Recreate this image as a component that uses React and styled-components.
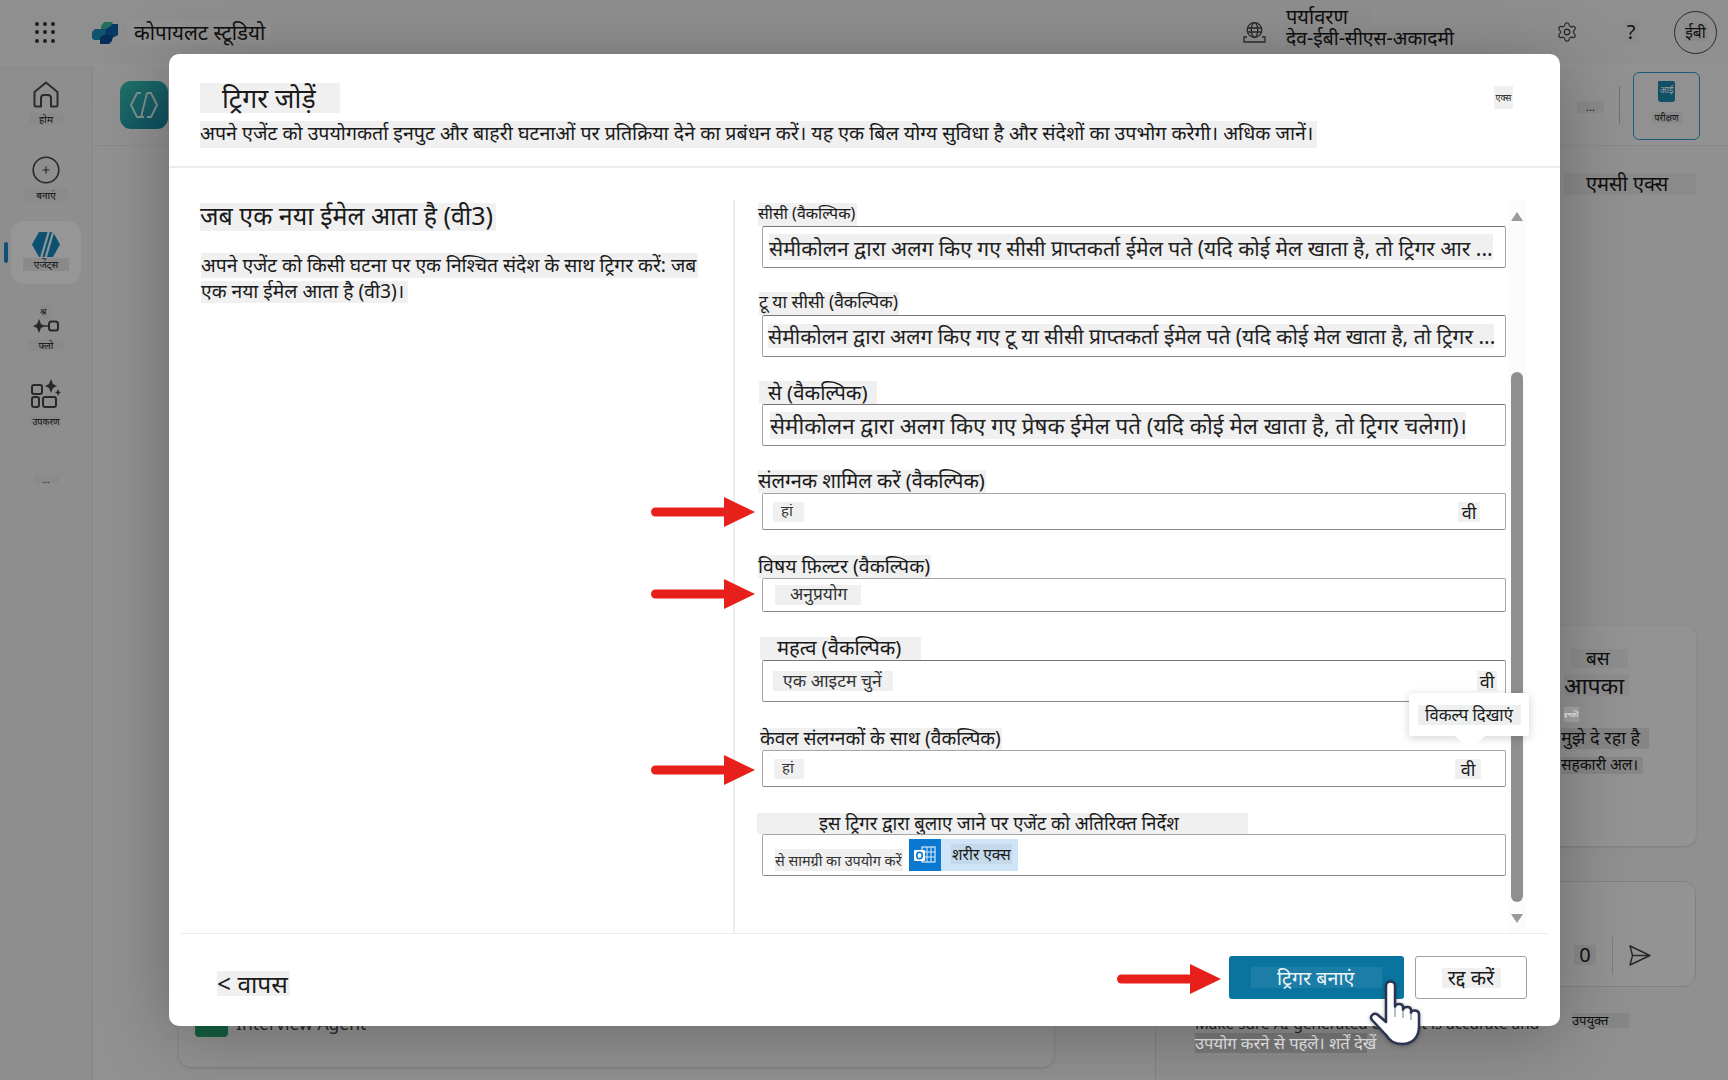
import React from 'react';
import styled, { createGlobalStyle } from 'styled-components';
import { Settings } from 'lucide-react';

const FONT = '"Noto Sans","Noto Sans Devanagari","Lohit Devanagari","Liberation Sans",sans-serif';

const Global = createGlobalStyle`
  html, body { margin: 0; padding: 0; height: 100%; overflow: hidden; background: #efefef; }
  body { font-family: ${FONT}; color: #111; }
  * { box-sizing: border-box; }
`;

const Page = styled.div`
  position: relative; width: 1728px; height: 1080px; overflow: hidden;
  display: flex; flex-direction: column; background: #efefef;
`;

/* ---------- text patches ---------- */
const Patch = styled.span`
  display: inline-block; white-space: nowrap;
  font-size: ${p => p.$size || 16}px;
  line-height: ${p => (p.$h || 22) - 2 * (p.$up || 0)}px;
  height: ${p => p.$h || 22}px;
  width: ${p => (p.$w ? p.$w + 'px' : 'auto')};
  padding-left: ${p => p.$pl || 0}px;
  margin-left: ${p => p.$ml || 0}px;
  margin-right: ${p => p.$mr || 0}px;
  margin-top: ${p => p.$mt || 0}px;
  background: ${p => p.$bg || '#f0f0f0'};
  color: ${p => p.$color || '#1a1a1a'};
  text-align: ${p => p.$align || 'left'};
  flex: none;
`;

/* ---------- top bar ---------- */
const TopBar = styled.header`
  height: 65px; flex: none; display: flex; align-items: center;
  padding-left: 35px; border-bottom: 1px solid #f6f6f6; background: #eeeeee;
`;
const AppDots = styled.div`
  width: 21px; height: 21px; display: grid; grid-template-columns: repeat(3, 5px);
  justify-content: space-between; align-content: space-between;
  span { width: 4px; height: 4px; border-radius: 50%; background: #333; }
`;
const LogoWrap = styled.div`margin-left: 36px; width: 26px; height: 24px; flex: none; display: flex;`;
const Spacer = styled.div`flex: 1;`;
const EnvBlock = styled.div`
  display: flex; flex-direction: column; align-items: flex-start; margin-left: 20px; width: 254px; padding-bottom: 10px;
`;
const HeaderIcon = styled.div`
  flex: none; display: flex; align-items: center; justify-content: center;
  margin-left: ${p => p.$ml || 0}px; color: #4a4a4a;
`;
const Avatar = styled.div`
  width: 43px; height: 43px; border-radius: 50%; border: 1px solid #444; flex: none;
  display: flex; align-items: center; justify-content: center; margin: 0 11px 0 35px;
`;

/* ---------- rail ---------- */
const Body = styled.div`flex: 1; display: flex; min-height: 0;`;
const Rail = styled.nav`
  width: 93px; flex: none; display: flex; flex-direction: column; align-items: center;
  padding-top: 16px; background: #ededed; border-right: 1px solid #dfdfdf; position: relative;
`;
const RailItem = styled.div`
  display: flex; flex-direction: column; align-items: center;
  margin-top: ${p => p.$mt || 0}px;
  width: ${p => (p.$active ? '70px' : 'auto')};
  height: ${p => (p.$active ? '63px' : 'auto')};
  padding-top: ${p => (p.$active ? '11px' : 0)};
  border-radius: 13px;
  background: ${p => (p.$active ? '#fbfbfb' : 'transparent')};
  position: relative;
`;
const RailBar = styled.span`
  position: absolute; left: -7px; top: 21px; width: 4px; height: 21px; border-radius: 2px; background: #1f86c8;
`;

/* ---------- main ---------- */
const Main = styled.main`flex: 1; display: flex; flex-direction: column; min-width: 0; background: #f2f2f3;`;
const SubHeader = styled.div`
  height: 81px; flex: none; display: flex; align-items: center; padding: 0 28px 0 27px;
  border-bottom: 1px solid #e4e4e4;
`;
const AgentLogo = styled.div`
  width: 48px; height: 48px; border-radius: 11px; flex: none;
  background: linear-gradient(135deg, #34c0b0, #1a7f9f);
  display: flex; align-items: center; justify-content: center;
`;
const VRule = styled.span`width: 1px; height: 38px; background: #bdbdbd; margin: 0 13px 0 15px;`;
const TestButton = styled.div`
  width: 67px; height: 68px; border: 1.5px solid #2d9cc8; border-radius: 6px; flex: none; margin-top: 1px;
  display: flex; flex-direction: column; align-items: center; padding-top: 8px; gap: 10px;
`;
const TestBadge = styled.div`
  width: 17px; height: 21px; background: #1f87a8; border-radius: 1px 2px 3px 3px; color: #fff;
  font-size: 9px; line-height: 18px; text-align: center;
`;
const Content = styled.div`flex: 1; display: flex; min-height: 0;`;
const LeftRegion = styled.div`
  width: 1062px; flex: none; display: flex; flex-direction: column; justify-content: flex-end;
  padding: 0 101px 13px 86px;
`;
const AgentCard = styled.div`
  height: 80px; border-radius: 12px; background: #f6f6f6; padding: 17px 16px; display: flex; align-items: flex-start; gap: 8px;
  box-shadow: 0 1px 3px rgba(0,0,0,.15); font-size: 17.500px; color: #444;
`;
const AgentTile = styled.div`width: 33px; height: 33px; border-radius: 4px; background: #25a06f; flex: none;`;
const AgentName = styled.span`margin-top: 7px; white-space: nowrap;`;
const RightPanel = styled.aside`
  flex: 1; border-left: 1px solid #dddddd; background: #f0f0f0; padding: 27px 55px 0 39px;
  display: flex; flex-direction: column; align-items: stretch;
`;
const ChatCard = styled.div`
  height: 220px; margin-top: 431px; border-radius: 12px; background: #f5f5f5;
  box-shadow: 0 1px 3px rgba(0,0,0,.12);
  display: flex; flex-direction: column; align-items: flex-start; padding: 23px 0 0 366px;
`;
const InputCard = styled.div`
  height: 106px; margin-top: 35px; border-radius: 12px; border: 1px solid #d8d8d8; background: #f5f5f5;
  display: flex; justify-content: flex-end; align-items: center; padding: 42px 44px 0 0;
`;
const CardRule = styled.span`width: 1px; height: 37px; background: #cfcfcf; margin: 0 16px;`;
const NoteBlock = styled.div`
  margin-top: 26px; display: flex; flex-direction: column; align-items: flex-start;
`;
const NoteRow = styled.div`display: flex; align-items: flex-start; width: 100%; height: 20px;`;
const NoteText = styled.span`font-size: 15.300px; line-height: 20px; color: #333; white-space: nowrap; width: 366px; flex: none;`;
const NoteLight = styled.div`
  position: relative; z-index: 1; height: 20px; width: 172px; background: #7c7c7c; color: #f2f2f2;
  font-size: 16.500px; line-height: 20px; white-space: nowrap;
`;
const WhiteTag = styled.div`
  position: relative; z-index: 1; height: 15px; width: 15px; margin: 11px 0 0 3px; background: #a6a6a6; color: #fff;
  font-size: 7px; line-height: 15px; white-space: nowrap; overflow: hidden;
`;

/* ---------- scrim + modal ---------- */
const Scrim = styled.div`position: absolute; inset: 0; background: rgba(0,0,0,.4);`;
const Modal = styled.section`
  position: absolute; z-index: 2; left: 169px; top: 54px; width: 1391px; height: 972px;
  background: #fff; border-radius: 10px; display: flex; flex-direction: column;
  box-shadow: 0 10px 70px rgba(0,0,0,.28);
`;
const ModalHeader = styled.div`
  height: 114px; flex: none; padding: 29px 0 0 31px; border-bottom: 2px solid #ececec;
`;
const TitleRow = styled.div`display: flex; justify-content: space-between; align-items: flex-start;`;
const ModalMiddle = styled.div`flex: 1; display: flex; min-height: 0;`;
const LeftCol = styled.div`
  width: 566px; flex: none; margin-top: 32px; padding: 3px 34px 0 31px; border-right: 2px solid #ededed;
  display: flex; flex-direction: column; align-items: flex-start;
`;
const Form = styled.div`
  width: 771px; flex: none; padding: 35px 0 0 27px; display: flex; flex-direction: column;
`;
const Field = styled.div`
  display: flex; flex-direction: column; align-items: flex-start; margin-top: ${p => p.$gap || 0}px;
`;
const InputBox = styled.div`
  width: 744px; height: ${p => p.$h}px; border: 1px solid #a6a6a6; border-bottom-color: #8a8a8a;
  border-top-color: ${p => p.$dark ? '#777' : '#a6a6a6'}; border-radius: 2px;
  display: flex; align-items: center; justify-content: space-between; padding: 0 ${p => p.$pr ?? 8}px 0 6px;
`;
const InlineRow = styled.div`display: flex; align-items: center;`;
const SourceTile = styled.div`display: flex; height: 32px; margin-left: 6px; background: #cfe4f7; width: 109px;`;
const SourceIcon = styled.div`
  width: 32px; height: 32px; background: #0a78d0; display: flex; align-items: center; justify-content: center; flex: none;
`;
const SourceName = styled.span`
  margin: 5px 0 0 10px; height: 20px; padding: 0 1px; background: #c4d9eb; font-size: 15.500px; line-height: 20px; color: #1a1a1a; white-space: nowrap;
`;
const ScrollCol = styled.div`
  width: 18px; margin-left: 2px; margin-top: 32px; flex: none; display: flex; flex-direction: column; align-items: center; padding-top: 12px;
  background: #fcfcfc;
`;
const Thumb = styled.div`width: 12px; height: 530px; margin-top: 151px; border-radius: 6px; background: #8f8f8f;`;
const ArrowUp = styled.div`
  width: 0; height: 0; border: 6.500px solid transparent; border-top: 0; border-bottom: 9px solid #9a9a9a;
`;
const ArrowDown = styled.div`
  width: 0; height: 0; margin-top: 12px; border: 6.500px solid transparent; border-bottom: 0; border-top: 9px solid #9a9a9a;
`;
const Footer = styled.div`
  height: 93px; flex: none; margin: 0 12px; border-top: 1px solid #ececec;
  display: flex; align-items: flex-start; padding: 22px 21px 0 36px;
`;
const PrimaryButton = styled.button`
  width: 175px; height: 43px; border: 0; border-radius: 3px; background: #0a74a0; font-family: inherit;
  display: flex; align-items: center; justify-content: center; padding: 0;
`;
const SecondaryButton = styled.button`
  width: 112px; height: 43px; margin-left: 11px; border: 1px solid #a0a0a0; border-radius: 3px; background: #fff; font-family: inherit;
  display: flex; align-items: center; justify-content: center; padding: 0;
`;

/* ---------- overlays ---------- */
const Tooltip = styled.div`
  position: absolute; z-index: 3; left: 1409px; top: 693px; width: 120px; height: 43px; background: #fff; border-radius: 3px;
  box-shadow: 0 2px 10px rgba(0,0,0,.18); display: flex; align-items: center; justify-content: center;
  &::after {
    content: ''; position: absolute; left: 46px; top: 43px; width: 0; height: 0;
    border-left: 15px solid transparent; border-right: 15px solid transparent; border-top: 14px solid #fff;
  }
`;
const RedArrow = styled.svg`position: absolute; z-index: 3; left: ${p => p.$x}px; top: ${p => p.$y}px;`;
const Hand = styled.svg`position: absolute; z-index: 3; left: 1369px; top: 978px; filter: drop-shadow(0 1px 2px rgba(0,0,0,.3));`;

const Arrow = ({ x, y }) => (
  <RedArrow $x={x} $y={y - 15} width="104" height="30" viewBox="0 0 104 30">
    <rect x="0" y="10.500" width="76" height="9" rx="4.500" fill="#e8201c" />
    <path d="M73 0 L104 15 L73 30 Z" fill="#e8201c" />
  </RedArrow>
);

const fields = [
  { label: 'सीसी (वैकल्पिक)', size: 16, lw: 99, lml: -4, lup: 1, gap: 0, ph: 'सेमीकोलन द्वारा अलग किए गए सीसी प्राप्तकर्ता ईमेल पते (यदि कोई मेल खाता है, तो ट्रिगर आर ...', phSize: 21, phH: 26, phW: 724, phUp: -1, h: 42, dark: true },
  { label: 'टू या सीसी (वैकल्पिक)', size: 17.500, lw: 140, lml: -3, lup: 2, gap: 24, ph: 'सेमीकोलन द्वारा अलग किए गए टू या सीसी प्राप्तकर्ता ईमेल पते (यदि कोई मेल खाता है, तो ट्रिगर ...', phSize: 21, phH: 24, phW: 726, phMl: -1, h: 42, dark: true },
  { label: 'से (वैकल्पिक)', size: 20.400, lw: 118, lml: -3, lpl: 9, gap: 24, ph: 'सेमीकोलन द्वारा अलग किए गए प्रेषक ईमेल पते (यदि कोई मेल खाता है, तो ट्रिगर चलेगा)।', phSize: 22.300, phH: 27, phW: 696, phMl: 1, h: 42, dark: true },
  { label: 'संलग्नक शामिल करें (वैकल्पिक)', size: 20, lw: 228, lml: -4, lup: 1, gap: 24, h: 37, val: 'हां', vw: 31, vpl: 8, vml: 4, vsize: 15, chev: 'वी', chevW: 22, chevR: 25 },
  { label: 'विषय फ़िल्टर (वैकल्पिक)', size: 19.500, lw: 173, lml: -4, lup: 1, gap: 25, h: 34, val: 'अनुप्रयोग', vw: 86, vpl: 15, vml: 6, vsize: 17.400 },
  { label: 'महत्व (वैकल्पिक)', size: 20.200, lw: 161, lml: -2, lpl: 17, lup: 1, gap: 25, h: 42, val: 'एक आइटम चुनें', vw: 120, vpl: 10, vml: 4, vsize: 17.500, vup: 1, chev: 'वी', chevW: 20, chevR: 8, dark: true },
  { label: 'केवल संलग्नकों के साथ (वैकल्पिक)', size: 19.200, lh: 22, lw: 242, lml: -2, lup: 1, gap: 26, h: 37, val: 'हां', vw: 30, vpl: 8, vml: 5, vsize: 15, chev: 'वी', chevW: 26, chevR: 24 },
];

const Home = () => (
  <svg width="26" height="27" viewBox="0 0 26 27" fill="none" stroke="#4a4a4a" strokeWidth="2" strokeLinejoin="round">
    <path d="M1.500 11 L13 1.500 L24.500 11 V24 a1.500 1.500 0 0 1-1.500 1.500 H18 V17 a3 3 0 0 0-3-3 H11 a3 3 0 0 0-3 3 V25.500 H3 a1.500 1.500 0 0 1-1.500-1.500 Z" />
  </svg>
);
const Plus = () => (
  <svg width="28" height="28" viewBox="0 0 28 28" fill="none" stroke="#444">
    <circle cx="14" cy="14" r="12.800" strokeWidth="1.600" />
    <path d="M14 10.500 V17.500 M10.500 14 H17.500" strokeWidth="1.200" />
  </svg>
);
const AgentHex = () => (
  <svg width="28" height="25" viewBox="0 0 28 25">
    <path d="M7 0 H21 L28 12.500 L21 25 H7 L0 12.500 Z" fill="#1587bf" />
    <path d="M17 -1 L9 26 M21.500 -1 L13.500 26" stroke="#eef6fa" strokeWidth="2.200" />
  </svg>
);
const FlowIcon = () => (
  <svg width="26" height="14" viewBox="0 0 26 14" fill="#444">
    <path d="M6 0 L8 5 L12 7 L8 9 L6 14 L4 9 L0 7 L4 5 Z" />
    <path d="M11 6.300 H15 V7.700 H11 Z" />
    <rect x="16" y="2.500" width="9" height="9" rx="2.500" fill="none" stroke="#444" strokeWidth="2" />
  </svg>
);
const Tools = () => (
  <svg width="30" height="29" viewBox="0 0 30 29" fill="none" stroke="#444" strokeWidth="2">
    <rect x="1" y="6" width="10" height="9" rx="2" />
    <rect x="1" y="18" width="7" height="10" rx="2" />
    <rect x="12" y="18" width="13" height="10" rx="2" />
    <path d="M20 0 L22 5 L26 7 L22 9 L20 14 L18 9 L14 7 L18 5 Z M27 10 L28 12.500 L30 13.500 L28 14.500 L27 17 L26 14.500 L24 13.500 L26 12.500 Z" fill="#444" stroke="none" />
  </svg>
);
const CopilotLogo = () => (
  <svg width="26" height="24" viewBox="0 0 26 24">
    <path d="M10 8 L16 4 H26 V15 L20 18 H10 Z" fill="#0d5fa8" />
    <path d="M9 6 L12 2 H21 L19 6 L14 9 H9 Z" fill="#3cb7a0" />
    <path d="M0 12 L3 9 H14 L13 15 L9 20 H2 L0 18 Z" fill="#1a8cb5" />
    <path d="M8 18 L11 15 H21 L20 21 L17 24 H8 Z" fill="#0a4a94" />
  </svg>
);
const GlobeBase = () => (
  <svg width="23" height="21" viewBox="0 0 23 21" fill="none" stroke="#444" strokeWidth="1.300">
    <circle cx="11.500" cy="8" r="7.300" />
    <ellipse cx="11.500" cy="8" rx="3.200" ry="7.300" />
    <path d="M4.300 6 H18.700 M4.300 10 H18.700" />
    <path d="M4 15 H1 V20 H22 V15 H19" />
  </svg>
);
const SendIcon = () => (
  <svg width="22" height="21" viewBox="0 0 22 21" fill="none" stroke="#444" strokeWidth="1.400" strokeLinejoin="round">
    <path d="M1 1 L21 10.500 L1 20 L3.500 10.500 Z M3.500 10.500 H21" />
  </svg>
);
const OutlookIcon = () => (
  <svg width="22" height="20" viewBox="0 0 22 20">
    <rect x="8" y="2" width="13" height="15" fill="none" stroke="#d8ecfb" strokeWidth="1.200" />
    <path d="M8 7 H21 M8 12 H21 M13 2 V17 M17 2 V17" stroke="#d8ecfb" strokeWidth="1" />
    <rect x="0" y="5" width="11" height="11" rx="1" fill="#fff" />
    <ellipse cx="5.500" cy="10.500" rx="2.800" ry="3.300" fill="none" stroke="#0a78d0" strokeWidth="1.600" />
  </svg>
);

export default function App() {
  return (
    <Page>
      <Global />
      <TopBar>
        <AppDots>{Array.from({ length: 9 }, (_, i) => <span key={i} />)}</AppDots>
        <LogoWrap><CopilotLogo /></LogoWrap>
        <Patch $size={20.500} $h={23} $w={144} $pl={7} $ml={9} $bg="#f4f4f4">कोपायलट स्टूडियो</Patch>
        <Spacer />
        <HeaderIcon><GlobeBase /></HeaderIcon>
        <EnvBlock>
          <Patch $size={20} $h={20} $w={85} $bg="#ebebeb">पर्यावरण</Patch>
          <Patch $size={19.300} $h={20} $w={166} $mt={1} $bg="#ebebeb">देव-ईबी-सीएस-अकादमी</Patch>
        </EnvBlock>
        <HeaderIcon $ml={16}><Settings size={22} strokeWidth={1.400} /></HeaderIcon>
        <Patch $size={20} $h={24} $w={16} $ml={45} $align="center" $bg="#ebebeb">?</Patch>
        <Avatar><Patch $size={15.500} $h={18} $w={24} $align="center" $bg="#e6e6e6">ईबी</Patch></Avatar>
      </TopBar>
      <Body>
        <Rail>
          <RailItem>
            <Home />
            <Patch $size={10} $h={12} $w={35} $mt={5} $align="center" $bg="#e6e6e6">होम</Patch>
          </RailItem>
          <RailItem $mt={31}>
            <Plus />
            <Patch $size={10} $h={12} $w={44} $mt={5} $align="center" $bg="#e6e6e6">बनाएं</Patch>
          </RailItem>
          <RailItem $mt={20} $active>
            <RailBar />
            <AgentHex />
            <Patch $size={10} $h={13} $w={46} $mt={1} $align="center" $bg="#e6e6e6">एजेंट्स</Patch>
          </RailItem>
          <RailItem $mt={21}>
            <Patch $size={9} $h={14} $w={12} $bg="#e6e6e6">श्र</Patch>
            <FlowIcon />
            <Patch $size={10} $h={12} $w={36} $mt={6} $align="center" $bg="#e6e6e6">फ्लो</Patch>
          </RailItem>
          <RailItem $mt={28}>
            <Tools />
            <Patch $size={9} $h={11} $w={32} $mt={8} $align="center" $bg="#e6e6e6">उपकरण</Patch>
          </RailItem>
          <RailItem $mt={48}>
            <Patch $size={9} $h={9} $w={25} $align="center" $bg="#e6e6e6">...</Patch>
          </RailItem>
        </Rail>
        <Main>
          <SubHeader>
            <AgentLogo>
              <svg width="28" height="26" viewBox="0 0 28 26" fill="none" stroke="#d8f2ee" strokeWidth="1.800" strokeLinejoin="round">
                <path d="M11 1 H7 L1 13 L7 25 H14 M17 1 H21 L27 13 L21 25 H17 M17 1 L11 25" />
              </svg>
            </AgentLogo>
            <Spacer />
            <Patch $size={11} $h={12} $w={27} $mt={3} $align="center" $bg="#e6e6e6">...</Patch>
            <VRule />
            <TestButton>
              <TestBadge>आई</TestBadge>
              <Patch $size={9} $h={11} $w={30} $align="center" $bg="#e6e6e6">परीक्षण</Patch>
            </TestButton>
          </SubHeader>
          <Content>
            <LeftRegion>
              <AgentCard><AgentTile /><AgentName>Interview Agent</AgentName></AgentCard>
            </LeftRegion>
            <RightPanel>
              <Patch $size={20} $h={22} $w={132} $pl={22} $ml={369} $bg="#e6e6e6">एमसी एक्स</Patch>
              <ChatCard>
                <Patch $size={19} $h={19} $w={57} $pl={15} $ml={10} $bg="#ebebeb">बस</Patch>
                <Patch $size={23} $h={22} $w={65} $ml={3} $mt={6} $bg="#ebebeb">आपका</Patch>
                <WhiteTag>इनकी</WhiteTag>
                <Patch $size={18} $h={21} $w={88} $mt={6} $up={1} $bg="#e0e0e0">मुझे दे रहा है</Patch>
                <Patch $size={15.500} $h={17} $w={82} $mt={8} $up={1} $bg="#e0e0e0">सहकारी अल।</Patch>
              </ChatCard>
              <InputCard>
                <Patch $size={20} $h={20} $w={22} $align="center" $bg="#e6e6e6">0</Patch>
                <CardRule />
                <SendIcon />
              </InputCard>
              <NoteBlock>
                <NoteRow>
                  <NoteText>Make sure AI-generated content is accurate and</NoteText>
                  <Patch $size={13} $h={15} $w={57} $ml={11} $bg="#e2e2e2">उपयुक्त</Patch>
                </NoteRow>
                <NoteLight>उपयोग करने से पहले। शर्तें देखें</NoteLight>
              </NoteBlock>
            </RightPanel>
          </Content>
        </Main>
      </Body>
      <Scrim />
      <Modal>
        <ModalHeader>
          <TitleRow>
            <Patch $size={26.500} $h={30} $w={140} $pl={22}>ट्रिगर जोड़ें</Patch>
            <Patch $size={9} $h={23} $w={19} $mt={3} $mr={47} $align="center">एक्स</Patch>
          </TitleRow>
          <Patch $size={19.600} $h={27} $w={1117} $mt={8} $up={2}>अपने एजेंट को उपयोगकर्ता इनपुट और बाहरी घटनाओं पर प्रतिक्रिया देने का प्रबंधन करें। यह एक बिल योग्य सुविधा है और संदेशों का उपभोग करेगी। अधिक जानें।</Patch>
        </ModalHeader>
        <ModalMiddle>
          <LeftCol>
            <Patch $size={25} $h={28} $w={296} $up={2}>जब एक नया ईमेल आता है (वी3)</Patch>
            <Patch $size={19.300} $h={25} $w={497} $ml={1} $mt={22} $up={1}>अपने एजेंट को किसी घटना पर एक निश्चित संदेश के साथ ट्रिगर करें: जब</Patch>
            <Patch $size={19.300} $h={22} $w={207} $ml={1} $mt={3} $up={1}>एक नया ईमेल आता है (वी3)।</Patch>
          </LeftCol>
          <Form>
            {fields.map(f => (
              <Field key={f.label} $gap={f.gap}>
                <Patch $size={f.size} $h={f.lh || 23} $w={f.lw} $ml={f.lml} $pl={f.lpl} $up={f.lup}>{f.label}</Patch>
                <InputBox $h={f.h} $dark={f.dark} $pr={f.chevR ?? 8}>
                  {f.ph && <Patch $size={f.phSize} $h={f.phH} $w={f.phW} $ml={f.phMl} $up={f.phUp} $color="#222">{f.ph}</Patch>}
                  {f.val && <Patch $size={f.vsize} $h={20} $w={f.vw} $pl={f.vpl} $ml={f.vml} $up={f.vup ?? 2} $color="#333">{f.val}</Patch>}
                  {f.chev && <Patch $size={18} $h={20} $w={f.chevW} $align="center">{f.chev}</Patch>}
                </InputBox>
              </Field>
            ))}
            <Field $gap={26}>
              <Patch $size={18.400} $h={21} $w={491} $ml={-5} $pl={62} $up={1}>इस ट्रिगर द्वारा बुलाए जाने पर एजेंट को अतिरिक्त निर्देश</Patch>
              <InputBox $h={42}>
                <InlineRow>
                  <Patch $size={14.400} $h={22} $w={128} $ml={6} $mt={10} $up={-1} $color="#333">से सामग्री का उपयोग करें</Patch>
                  <SourceTile>
                    <SourceIcon><OutlookIcon /></SourceIcon>
                    <SourceName>शरीर एक्स</SourceName>
                  </SourceTile>
                </InlineRow>
              </InputBox>
            </Field>
          </Form>
          <ScrollCol>
            <ArrowUp />
            <Thumb />
            <ArrowDown />
          </ScrollCol>
        </ModalMiddle>
        <Footer>
          <Patch $size={24.500} $h={25} $w={73} $mt={15}>{'< वापस'}</Patch>
          <Spacer />
          <PrimaryButton><Patch $size={19.700} $h={21} $w={131} $pl={26} $bg="#1c7ea6" $color="#eaf4f9">ट्रिगर बनाएं</Patch></PrimaryButton>
          <SecondaryButton><Patch $size={20} $h={20} $w={59} $align="center">रद्द करें</Patch></SecondaryButton>
        </Footer>
      </Modal>
      <Tooltip><Patch $size={16.700} $h={20} $w={103} $align="center" $bg="#eef0f0">विकल्प दिखाएं</Patch></Tooltip>
      <Arrow x={651} y={512} />
      <Arrow x={651} y={594} />
      <Arrow x={651} y={770} />
      <Arrow x={1117} y={979} />
      <Hand width="52" height="68" viewBox="0 0 52 68">
        <path d="M17 8 c0-6 9-6 9 0 v21 c0-4 8-4 8 0 v3 c0-4 8-4 8 0 v3 c0-4 8-3 8 1 v12 c0 11-6 18-17 18 c-8 0-12-3-16-9 L3 42 c-3-4 2-8 6-5 l8 7 z"
          fill="#fff" stroke="#2a3350" strokeWidth="2.500" strokeLinejoin="round" />
        <path d="M26 29 v10 M34 32 v8 M42 35 v7" stroke="#8a93a8" strokeWidth="1.200" fill="none" />
      </Hand>
    </Page>
  );
}
